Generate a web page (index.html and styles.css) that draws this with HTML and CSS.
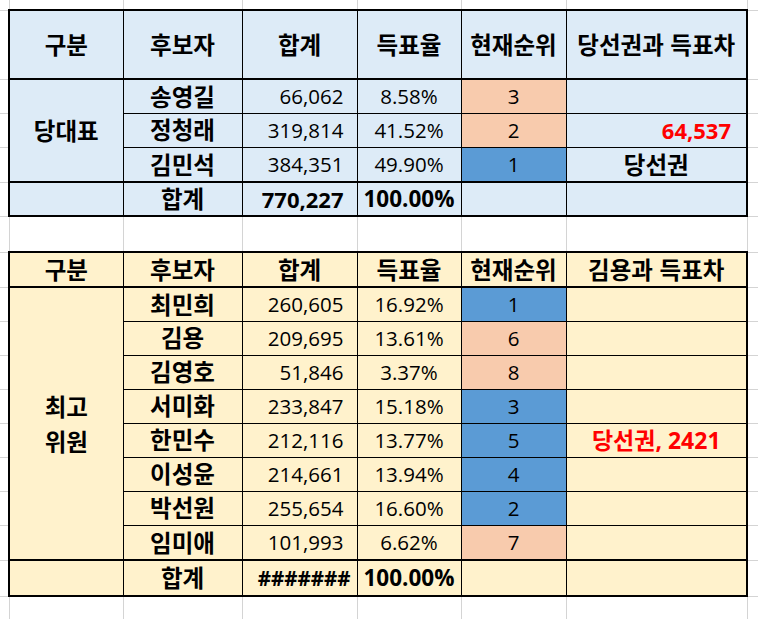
FILE: index.html
```html
<!DOCTYPE html>
<html lang="ko">
<head>
<meta charset="utf-8">
<title>득표 현황</title>
<link rel="stylesheet" href="styles.css">
</head>
<body>
<table class="sheet">
  <colgroup>
    <col class="w0"><col class="w1"><col class="w2"><col class="w3"><col class="w4"><col class="w5"><col class="w6"><col class="w7">
  </colgroup>
  <tbody>
    <tr class="r-top">
      <td class="g"></td><td class="g"></td><td class="g"></td><td class="g"></td><td class="g"></td><td class="g"></td><td class="g"></td><td class="g"></td>
    </tr>
    <tr class="r-head1 head blue">
      <td class="g"></td>
      <td class="c l hd">구분</td>
      <td class="c hd">후보자</td>
      <td class="c hd">합계</td>
      <td class="c hd">득표율</td>
      <td class="c hd">현재순위</td>
      <td class="c r hd">당선권과 득표차</td>
      <td class="g"></td>
    </tr>
    <tr class="r34 blue">
      <td class="g"></td>
      <td class="c l hd" rowspan="3">당대표</td>
      <td class="c name">송영길</td>
      <td class="c num">66,062</td>
      <td class="c pct">8.58%</td>
      <td class="c rank peach">3</td>
      <td class="c r"></td>
      <td class="g"></td>
    </tr>
    <tr class="r34 blue">
      <td class="g"></td>
      <td class="c name">정청래</td>
      <td class="c num">319,814</td>
      <td class="c pct">41.52%</td>
      <td class="c rank peach">2</td>
      <td class="c r num red bold gap">64,537</td>
      <td class="g"></td>
    </tr>
    <tr class="r35 blue">
      <td class="g"></td>
      <td class="c name">김민석</td>
      <td class="c num">384,351</td>
      <td class="c pct">49.90%</td>
      <td class="c rank sky">1</td>
      <td class="c r hd">당선권</td>
      <td class="g"></td>
    </tr>
    <tr class="r34 total blue">
      <td class="g"></td>
      <td class="c l"></td>
      <td class="c name">합계</td>
      <td class="c num bold">770,227</td>
      <td class="c pct bold">100.00%</td>
      <td class="c"></td>
      <td class="c r"></td>
      <td class="g"></td>
    </tr>
    <tr class="r-blank">
      <td class="g"></td><td class="g"></td><td class="g"></td><td class="g"></td><td class="g"></td><td class="g"></td><td class="g"></td><td class="g"></td>
    </tr>
    <tr class="r35 head cream">
      <td class="g"></td>
      <td class="c l hd">구분</td>
      <td class="c hd">후보자</td>
      <td class="c hd">합계</td>
      <td class="c hd">득표율</td>
      <td class="c hd">현재순위</td>
      <td class="c r hd">김용과 득표차</td>
      <td class="g"></td>
    </tr>
    <tr class="r34 cream">
      <td class="g"></td>
      <td class="c l hd two" rowspan="8">최고<br>위원</td>
      <td class="c name">최민희</td>
      <td class="c num">260,605</td>
      <td class="c pct">16.92%</td>
      <td class="c rank sky">1</td>
      <td class="c r"></td>
      <td class="g"></td>
    </tr>
    <tr class="r34 cream">
      <td class="g"></td>
      <td class="c name">김용</td>
      <td class="c num">209,695</td>
      <td class="c pct">13.61%</td>
      <td class="c rank peach">6</td>
      <td class="c r"></td>
      <td class="g"></td>
    </tr>
    <tr class="r34 cream">
      <td class="g"></td>
      <td class="c name">김영호</td>
      <td class="c num">51,846</td>
      <td class="c pct">3.37%</td>
      <td class="c rank peach">8</td>
      <td class="c r"></td>
      <td class="g"></td>
    </tr>
    <tr class="r34 cream">
      <td class="g"></td>
      <td class="c name">서미화</td>
      <td class="c num">233,847</td>
      <td class="c pct">15.18%</td>
      <td class="c rank sky">3</td>
      <td class="c r"></td>
      <td class="g"></td>
    </tr>
    <tr class="r34 cream">
      <td class="g"></td>
      <td class="c name">한민수</td>
      <td class="c num">212,116</td>
      <td class="c pct">13.77%</td>
      <td class="c rank sky">5</td>
      <td class="c r hd red">당선권, 2421</td>
      <td class="g"></td>
    </tr>
    <tr class="r34 cream">
      <td class="g"></td>
      <td class="c name">이성윤</td>
      <td class="c num">214,661</td>
      <td class="c pct">13.94%</td>
      <td class="c rank sky">4</td>
      <td class="c r"></td>
      <td class="g"></td>
    </tr>
    <tr class="r34 cream">
      <td class="g"></td>
      <td class="c name">박선원</td>
      <td class="c num">255,654</td>
      <td class="c pct">16.60%</td>
      <td class="c rank sky">2</td>
      <td class="c r"></td>
      <td class="g"></td>
    </tr>
    <tr class="r35 cream">
      <td class="g"></td>
      <td class="c name">임미애</td>
      <td class="c num">101,993</td>
      <td class="c pct">6.62%</td>
      <td class="c rank peach">7</td>
      <td class="c r"></td>
      <td class="g"></td>
    </tr>
    <tr class="r36 total cream">
      <td class="g"></td>
      <td class="c l"></td>
      <td class="c name">합계</td>
      <td class="c num bold hash">#######</td>
      <td class="c pct bold">100.00%</td>
      <td class="c"></td>
      <td class="c r"></td>
      <td class="g"></td>
    </tr>
    <tr class="r-end">
      <td class="g"></td><td class="g"></td><td class="g"></td><td class="g"></td><td class="g"></td><td class="g"></td><td class="g"></td><td class="g"></td>
    </tr>
  </tbody>
</table>
</body>
</html>
```
FILE: styles.css
```css
html, body {
  margin: 0;
  padding: 0;
  background: #ffffff;
}

body {
  width: 758px;
  height: 619px;
  overflow: hidden;
  font-family: "Open Sans", "Noto Sans CJK KR", sans-serif;
  color: #000000;
}

.sheet {
  border-collapse: collapse;
  table-layout: fixed;
  width: 758px;
}

.w0 { width: 9px; }
.w1 { width: 114px; }
.w2 { width: 119px; }
.w3 { width: 115px; }
.w4 { width: 104px; }
.w5 { width: 105px; }
.w6 { width: 181px; }
.w7 { width: 11px; }

td {
  padding: 0;
  line-height: 1;
  white-space: nowrap;
  overflow: hidden;
}

/* sheet gridlines */
td.g {
  border: 1px solid #d4d4d4;
}
tr.r-top td.g { border-top: none; }
tr.r-end td.g { border-bottom: none; }
tr td.g:first-child { border-left: none; }
tr td.g:last-child { border-right: none; }

/* row heights */
.r-top { height: 10px; }
.r-head1 { height: 69px; }
.r34 { height: 34px; }
.r35 { height: 35px; }
.r36 { height: 36px; }
.r-blank { height: 36px; }
.r-end { height: 23px; }

/* data cells */
td.c {
  border: 1px solid #000000;
  text-align: center;
  vertical-align: middle;
}
.blue td.c { background: #ddebf7; }
.cream td.c { background: #fff2cc; }

.head td.c { border-top: 2px solid #000000; border-bottom: 2px solid #000000; }
.total td.c { border-top: 2px solid #000000; border-bottom: 2px solid #000000; }
td.c.l { border-left: 2px solid #000000; }
td.c.r { border-right: 2px solid #000000; }

.hd, .name {
  font-family: "Noto Sans CJK KR", sans-serif;
  font-size: 23.5px;
  font-weight: 700;
}
.hd.red {
  font-family: "Open Sans", "Noto Sans CJK KR", sans-serif;
  font-size: 23px;
}

.two { line-height: 35px; }

td.c.num {
  font-size: 20.5px;
  text-align: right;
  padding-right: 13px;
}
td.c.num.bold { font-size: 22px; }
td.c.num.gap { padding-right: 15px; }
td.c.num.hash { padding-right: 6px; font-size: 20.5px; }

.pct, .rank {
  font-size: 20.5px;
}
td.c.pct.bold { font-size: 22.5px; }

.bold { font-weight: 700; }
.red { color: #ff0000; }

.blue td.c.peach, .cream td.c.peach { background: #f8cbad; }
.blue td.c.sky, .cream td.c.sky { background: #5b9bd5; }
```
